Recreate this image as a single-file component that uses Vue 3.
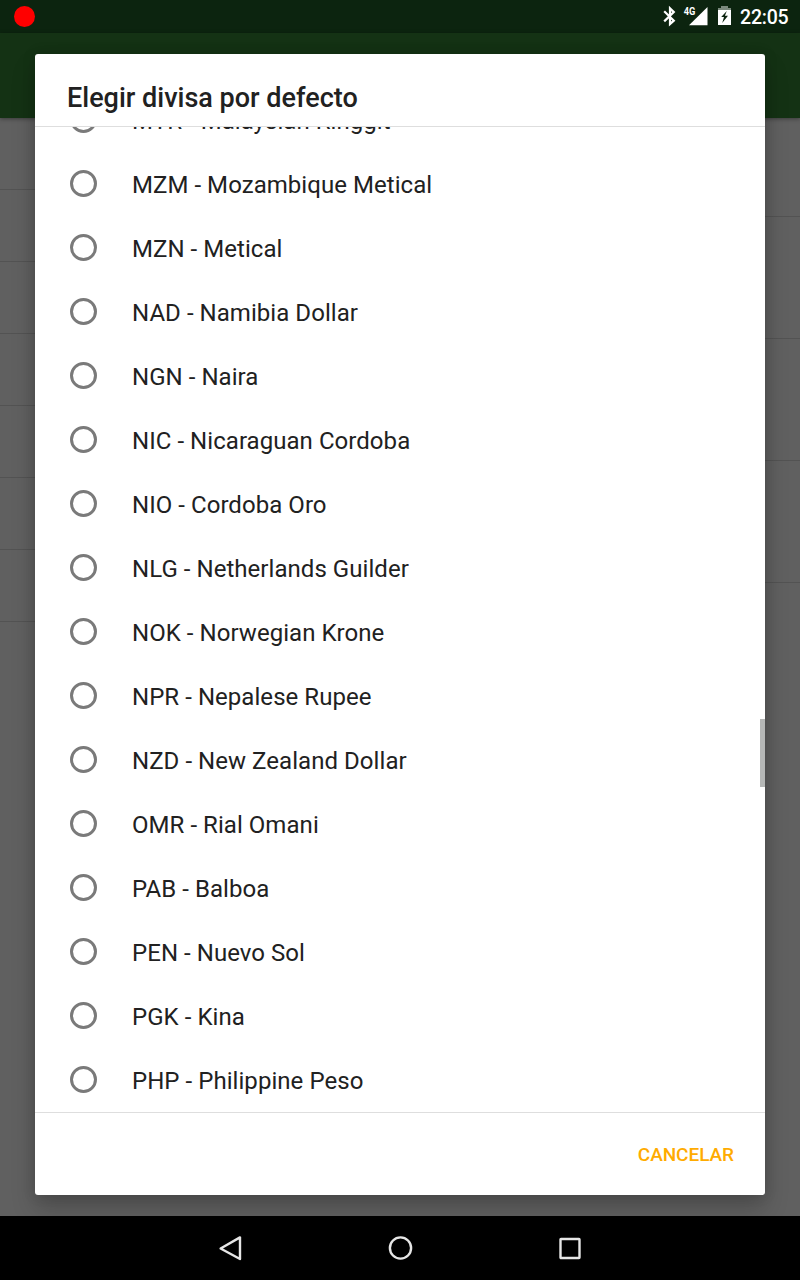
<script setup>
const currencies = [
  ['MYR', 'Malaysian Ringgit'],
  ['MZM', 'Mozambique Metical'],
  ['MZN', 'Metical'],
  ['NAD', 'Namibia Dollar'],
  ['NGN', 'Naira'],
  ['NIC', 'Nicaraguan Cordoba'],
  ['NIO', 'Cordoba Oro'],
  ['NLG', 'Netherlands Guilder'],
  ['NOK', 'Norwegian Krone'],
  ['NPR', 'Nepalese Rupee'],
  ['NZD', 'New Zealand Dollar'],
  ['OMR', 'Rial Omani'],
  ['PAB', 'Balboa'],
  ['PEN', 'Nuevo Sol'],
  ['PGK', 'Kina'],
  ['PHP', 'Philippine Peso'],
]
</script>

<template>
  <div class="screen">
    <header class="status">
      <span class="record"></span>
      <svg class="status-icons" width="70" height="33" viewBox="0 0 70 33">
        <path d="M2.2 11.3 L11.8 20.6 L8 24 V8.4 L11.8 12.1 L2.2 21.4" fill="none" stroke="#fff" stroke-width="2.2" />
        <path d="M45.5 7 V25.3 H27 Z" fill="#fff" />
        <text x="21.7" y="15" class="network" textLength="11.6" lengthAdjust="spacingAndGlyphs">4G</text>
        <path d="M59 6 H66 V8 H69 V11 H56 V8 H59 Z" fill="#7b897d" />
        <path d="M56 10 H69 V25 H56 Z" fill="#fff" />
        <path d="M64.8 11 L59.2 17 H62 L60.2 23 L66 15.8 H62.9 Z" fill="#0c240f" />
      </svg>
      <span class="clock">22:05</span>
    </header>
    <div class="toolbar"></div>
    <div class="content">
      <div class="pane left"><div v-for="n in 7" :key="n" class="setting"></div></div>
      <div class="pane right"><div v-for="n in 4" :key="n" class="setting"></div></div>
    </div>
    <section class="dialog">
      <h1 class="title">Elegir divisa por defecto</h1>
      <div class="viewport">
        <ul class="list">
          <li v-for="[code, name] in currencies" :key="code" class="option">
            <span class="radio"></span>
            <span class="label">{{ code }} - {{ name }}</span>
          </li>
        </ul>
        <div class="thumb"></div>
      </div>
      <footer class="actions"><button class="cancel">CANCELAR</button></footer>
    </section>
    <nav class="nav">
      <svg width="28" height="28" viewBox="0 0 28 28"><path d="M24 3.4 V25 L4.6 14.5 Z" /></svg>
      <svg width="28" height="28" viewBox="0 0 28 28"><circle cx="14.5" cy="14" r="10.6" /></svg>
      <svg width="28" height="28" viewBox="0 0 28 28"><rect x="4.5" y="5" width="19" height="19" rx=".5" /></svg>
    </nav>
  </div>
</template>

<style>
body { margin: 0; }
</style>

<style scoped>
.screen {
  position: relative;
  display: flex;
  flex-direction: column;
  width: 800px;
  height: 1280px;
  overflow: hidden;
  background: #606060;
  font-family: Roboto, sans-serif;
  color: #212121;
}
.status {
  display: flex;
  align-items: center;
  height: 33px;
  background: #0c240f;
}
.record {
  width: 21px;
  height: 21px;
  margin-left: 13.5px;
  border-radius: 50%;
  background: #f00;
}
.status-icons { margin-left: auto; }
.network { font: 700 10.5px Roboto, sans-serif; fill: #fff; }
.clock {
  width: 49px;
  margin: 2px 11px 0 8px;
  font-size: 19.5px;
  font-weight: 500;
  letter-spacing: -.2px;
  line-height: 22px;
  white-space: nowrap;
  color: #fff;
}
.toolbar {
  height: 85px;
  background: #143214;
  box-shadow: 0 1px 4px rgba(0, 0, 0, .4);
  z-index: 1;
}
.content {
  display: flex;
  justify-content: space-between;
  flex: 1;
}
.pane { width: 390px; }
.setting {
  box-sizing: border-box;
  border-bottom: 1px solid #535353;
}
.left .setting { height: 72px; }
.right .setting { height: 122px; }
.right .setting:first-child { height: 99px; }
.dialog {
  position: absolute;
  z-index: 2;
  top: 54px;
  left: 35px;
  display: flex;
  flex-direction: column;
  width: 730px;
  height: 1141px;
  border-radius: 3px;
  background: #fff;
  box-shadow: 0 14px 24px rgba(0, 0, 0, .2), 0 0 14px rgba(0, 0, 0, .14);
}
.title {
  box-sizing: border-box;
  height: 72px;
  margin: 0;
  padding: 28px 32px 0;
  font-size: 27px;
  font-weight: 500;
  line-height: 32px;
}
.viewport {
  position: relative;
  box-sizing: border-box;
  height: 987px;
  border-top: 1px solid #dedede;
  border-bottom: 1px solid #dedede;
  overflow: hidden;
}
.list {
  margin: -40px 0 0;
  padding: 0;
  list-style: none;
}
.option {
  display: flex;
  align-items: center;
  height: 64px;
  padding-left: 35px;
  gap: 35px;
  font-size: 24px;
  letter-spacing: .05px;
}
.label { padding-top: 4px; }
.radio {
  box-sizing: border-box;
  width: 27px;
  height: 27px;
  border: 3px solid #7a7a7a;
  border-radius: 50%;
}
.thumb {
  position: absolute;
  top: 592px;
  right: 0;
  width: 5px;
  height: 68px;
  background: #b5b7b6;
}
.actions {
  display: flex;
  flex: 1;
  align-items: center;
  justify-content: flex-end;
  padding: 2px 31px 0 0;
}
.cancel {
  padding: 0;
  border: 0;
  background: none;
  font: 500 19px/24px Roboto, sans-serif;
  letter-spacing: -.05px;
  color: #ffab00;
}
.nav {
  display: flex;
  align-items: center;
  justify-content: center;
  gap: 142px;
  height: 64px;
  background: #000;
  z-index: 3;
}
.nav path, .nav circle, .nav rect {
  fill: none;
  stroke: #e6e6e6;
  stroke-width: 2.4;
  stroke-linejoin: round;
}
</style>
